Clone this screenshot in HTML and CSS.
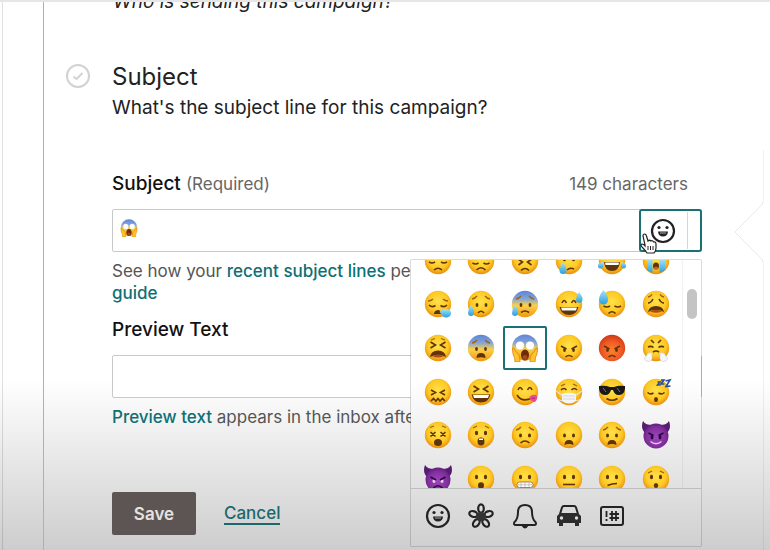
FILE: index.html
```html
<!DOCTYPE html>
<html lang="en">
<head>
    <meta charset="UTF-8">
    <meta name="viewport" content="width=device-width, initial-scale=1.0">
    <title>Campaign Subject</title>
    <link rel="stylesheet" href="styles.css">
</head>
<body>
    <!-- shared emoji parts -->
    <svg class="defs" width="0" height="0" aria-hidden="true">
        <defs>
            <radialGradient id="skin" cx="50%" cy="42%" r="58%">
                <stop offset="0" stop-color="#ffe14a"/>
                <stop offset="0.65" stop-color="#fdc924"/>
                <stop offset="1" stop-color="#e98d0d"/>
            </radialGradient>
            <linearGradient id="cold" x1="0" y1="0" x2="0" y2="1">
                <stop offset="0" stop-color="#5c86d6"/>
                <stop offset="0.3" stop-color="#83a2d8"/>
                <stop offset="0.55" stop-color="#fbd04a"/>
                <stop offset="1" stop-color="#ef980f"/>
            </linearGradient>
            <radialGradient id="red" cx="50%" cy="60%" r="60%">
                <stop offset="0" stop-color="#f9842d"/>
                <stop offset="0.6" stop-color="#ef5a24"/>
                <stop offset="1" stop-color="#cf3714"/>
            </radialGradient>
            <radialGradient id="purple" cx="50%" cy="55%" r="58%">
                <stop offset="0" stop-color="#a044bd"/>
                <stop offset="0.65" stop-color="#83309f"/>
                <stop offset="1" stop-color="#5b1c78"/>
            </radialGradient>
            <linearGradient id="water" x1="0" y1="0" x2="0" y2="1">
                <stop offset="0" stop-color="#a5e4fa"/>
                <stop offset="1" stop-color="#2c9fdc"/>
            </linearGradient>
        </defs>
        <symbol id="face" viewBox="0 0 28 28"><circle cx="14" cy="14" r="13.2" fill="url(#skin)"/></symbol>
        <symbol id="face-cold" viewBox="0 0 28 28"><circle cx="14" cy="14" r="13.2" fill="url(#cold)"/></symbol>
        <symbol id="face-devil" viewBox="0 0 28 28">
            <path d="M1 0C-1 5 0 10 4 12L10 4C6 4 3 3 1 0ZM27 0C29 5 28 10 24 12L18 4C22 4 25 3 27 0Z" fill="#571b73"/>
            <circle cx="14" cy="15" r="12.5" fill="url(#purple)"/>
        </symbol>
        <symbol id="eyes" viewBox="0 0 28 28">
            <ellipse class="ink" cx="9.5" cy="12" rx="1.6" ry="2.2"/>
            <ellipse class="ink" cx="18.5" cy="12" rx="1.6" ry="2.2"/>
        </symbol>
        <symbol id="eyes-shut" viewBox="0 0 28 28">
            <path class="line" d="M5.5 13Q8.5 15.5 11.5 13.5M16.5 13.5Q19.5 15.5 22.5 13"/>
        </symbol>
        <symbol id="eyes-tight" viewBox="0 0 28 28">
            <path class="line" d="M6.5 8L11.5 11L6.5 14M21.5 8L16.5 11L21.5 14"/>
        </symbol>
        <symbol id="brows-sad" viewBox="0 0 28 28">
            <path class="brow" d="M5 9Q8 8.5 10 6M23 9Q20 8.5 18 6"/>
        </symbol>
        <symbol id="scream" viewBox="0 0 28 28">
            <circle cx="14" cy="13.5" r="13" fill="url(#cold)"/>
            <circle cx="9" cy="11.5" r="4" fill="#fff"/>
            <circle cx="19" cy="11.5" r="4" fill="#fff"/>
            <ellipse cx="14" cy="21" rx="4" ry="5.5" fill="#6d2c08"/>
            <ellipse cx="14" cy="23.5" rx="2.5" ry="2.5" fill="#a84718"/>
            <path d="M1.5 14Q3 13 4 16L6 19Q9 20 9 28H4Q4 23 2 20ZM26.5 14Q25 13 24 16L22 19Q19 20 19 28H24Q24 23 26 20Z" fill="#ffc42a" stroke="#d87d0b" stroke-width="0.8"/>
        </symbol>
        <symbol id="smiley" viewBox="0 0 28 28">
            <circle cx="14" cy="14" r="11" fill="none" stroke="#222" stroke-width="2.2"/>
            <circle cx="10" cy="10.5" r="1.6" fill="#222"/>
            <circle cx="18" cy="10.5" r="1.6" fill="#222"/>
            <path d="M9 14.5H19Q18.500 19.500 14 19.500T9 14.500Z" fill="#222"/>
            <path d="M11 16H17" stroke="#aaa" stroke-width="1"/>
        </symbol>
    </svg>

    <div class="page">
        <div class="rail"></div>

        <main class="content">
            <div class="previous-step"><em>Who is sending this campaign?</em></div>

            <section class="step">
                <svg class="step-check" viewBox="0 0 24 24" aria-hidden="true">
                    <circle cx="12" cy="12" r="11"/>
                    <path d="M7.5 12.5L10.5 15L16.5 9"/>
                </svg>
                <form class="step-body">
                    <h1>Subject</h1>
                    <p class="intro">What's the subject line for this campaign?</p>

                    <div class="label-row">
                        <label for="subject">Subject <span class="required">(Required)</span></label>
                        <span class="counter">149 characters</span>
                    </div>
                    <div class="field">
                        <input type="text" id="subject" class="text-input">
                        <svg class="typed-emoji" viewBox="0 0 28 28" aria-hidden="true"><use href="#scream"/></svg>
                        <button type="button" class="emoji-toggle" aria-label="Insert emoji">
                            <svg viewBox="0 0 28 28"><use href="#smiley"/></svg>
                            <span class="toggle-edge"></span>
                        </button>
                        <svg class="pointer" viewBox="0 0 18 22" aria-hidden="true">
                            <path d="M5 12L3 3Q3 1 4.5 1T6.5 3L8 8Q9.5 6.5 11 8Q12.5 7 13.5 9Q16 8.5 16 11V15Q16 18 14 20H7Q5 17 2 14Q0 11.5 2 11Q3.5 11 5 13Z" fill="#fff" stroke="#222" stroke-width="1.2"/>
                            <path d="M8 13V17M10.5 13V17M13 13V17" stroke="#222" stroke-width="1"/>
                        </svg>

                        <div class="picker">
                            <div class="picker-scroll">
                                <div class="emoji-grid">
                                    <button type="button" aria-label="Unamused"><svg viewBox="0 0 28 28"><use href="#face"/><path class="line" d="M5 15Q8 17 11 15M17 15Q20 17 23 15M10 23Q14 19.5 18 23"/></svg></button>
                                    <button type="button" aria-label="Disappointed"><svg viewBox="0 0 28 28"><use href="#face"/><path class="line" d="M5.5 16Q8.5 18 11.5 16M16.5 16Q19.5 18 22.5 16M9.5 23Q14 18.5 18.5 23"/></svg></button>
                                    <button type="button" aria-label="Persevering"><svg viewBox="0 0 28 28"><use href="#face"/><path class="line" d="M7 12L11.5 15L7.5 18M21 12L16.5 15L20.5 18M10 23.5Q14 19.5 18 23.5"/></svg></button>
                                    <button type="button" aria-label="Crying"><svg viewBox="0 0 28 28"><use href="#face"/><use href="#eyes"/><path class="line" d="M12 23Q15 20 19 22"/><path class="tear" d="M8 15Q12 21 11.5 23.5A3.5 3.5 0 0 1 4.5 23.5Q5 20 8 15Z"/></svg></button>
                                    <button type="button" aria-label="Tears of joy"><svg viewBox="0 0 28 28"><use href="#face"/><path class="line" d="M5.5 12Q8 8 11 12M17 12Q20 8 22.5 12"/><path class="ink" d="M6 15H22Q21 24 14 24T6 15Z"/><path d="M7 15.5H21L20.5 18H7.5Z" fill="#fff"/><path class="tear" d="M5 15Q-1 16 0 20Q2 23 5 20ZM23 15Q29 16 28 20Q26 23 23 20Z"/></svg></button>
                                    <button type="button" aria-label="Sobbing"><svg viewBox="0 0 28 28"><use href="#face"/><path class="tear" d="M5 12H10.5V25.5Q7 24.5 5 23ZM17.5 12H23V23Q21 24.5 17.5 25.5Z"/><path class="line" d="M5 11Q8 13 11 11M17 11Q20 13 23 11"/><ellipse class="ink" cx="14" cy="19" rx="3" ry="3.5"/><ellipse cx="14" cy="21" rx="2" ry="1.3" fill="#d3652b"/></svg></button>

                                    <button type="button" aria-label="Sleepy"><svg viewBox="0 0 28 28"><use href="#face"/><path class="line" d="M5 15Q8 18 11.5 15.5M16.5 15.5Q20 18 23 15"/><path class="brow" d="M4 11Q7 11 9 9M24 11Q21 11 19 9"/><path class="ink" d="M10 24Q10 20 15 20L19 24Z"/><path class="tear" d="M15.5 22Q19 17 26 20Q29 26 23 27.5Q19 28 18 25Z"/></svg></button>
                                    <button type="button" aria-label="Sad but relieved"><svg viewBox="0 0 28 28"><use href="#face"/><use href="#brows-sad"/><ellipse class="ink" cx="10" cy="15" rx="1.4" ry="2"/><ellipse class="ink" cx="19" cy="15" rx="1.4" ry="2"/><path class="line" d="M11 23Q14 19.5 17 23"/><path class="tear" d="M4 15Q7.5 20 7 23A3 3 0 0 1 1 23Q1 19 4 15Z"/></svg></button>
                                    <button type="button" aria-label="Anxious with sweat"><svg viewBox="0 0 28 28"><use href="#face-cold"/><use href="#brows-sad"/><ellipse class="ink" cx="10" cy="15" rx="1.4" ry="2"/><ellipse class="ink" cx="19" cy="15" rx="1.4" ry="2"/><path class="line" d="M10 22.5Q14 19.5 18 22.5"/><path class="tear" d="M4 15Q7.5 20 7 23A3 3 0 0 1 1 23Q1 19 4 15Z"/></svg></button>
                                    <button type="button" aria-label="Grinning with sweat"><svg viewBox="0 0 28 28"><use href="#face"/><path class="line" d="M7 13Q9 8 11.5 13M16.5 13Q19 8 21 13"/><path class="ink" d="M4.5 17H23.5Q21.5 25 14 25T4.5 17Z"/><path d="M6 17.5H22L21 20.5H7Z" fill="#fff"/><path class="tear" d="M24 2Q28 7 27.5 10A3.3 3.3 0 0 1 21 10Q21 6 24 2Z"/></svg></button>
                                    <button type="button" aria-label="Downcast with sweat"><svg viewBox="0 0 28 28"><use href="#face"/><path class="line" d="M5.5 16Q9 18 12 16M16.5 16Q20 18 23 16M10.5 23.5Q14 20 17.5 23.5"/><path class="tear" d="M5.5 0Q10.5 6 10 10A4.5 4.5 0 0 1 1 10Q1 5 5.5 0Z"/></svg></button>
                                    <button type="button" aria-label="Weary"><svg viewBox="0 0 28 28"><use href="#face"/><path class="line" d="M6 13Q9 13 11 9M22 13Q19 13 17 9"/><path class="brow" d="M6 7Q8 7 10 4.5M22 7Q20 7 18 4.5"/><path class="ink" d="M6 22Q7 16 14 16T22 22Q19 20 14 20T6 22Z"/><path d="M8 21.5Q14 18 20 21.5Q14 24 8 21.5Z" fill="#b04a1c"/></svg></button>

                                    <button type="button" aria-label="Tired"><svg viewBox="0 0 28 28"><use href="#face"/><use href="#eyes-tight"/><path class="brow" d="M7 6L11 4.5M21 6L17 4.5"/><path class="ink" d="M6 23Q7 16.5 14 16.5T22 23Q18 21 14 21T6 23Z"/><path d="M8 22Q14 19 20 22Q14 25 8 22Z" fill="#b04a1c"/></svg></button>
                                    <button type="button" aria-label="Fearful"><svg viewBox="0 0 28 28"><use href="#face-cold"/><use href="#brows-sad"/><ellipse class="ink" cx="9.5" cy="15" rx="1.4" ry="2"/><ellipse class="ink" cx="18.5" cy="15" rx="1.4" ry="2"/><path class="ink" d="M9.5 24Q9.5 19 14 19T18.5 24Q14 22.5 9.5 24Z"/></svg></button>
                                    <button type="button" class="selected" aria-label="Screaming in fear"><svg viewBox="0 0 28 28"><use href="#scream"/></svg></button>
                                    <button type="button" aria-label="Angry"><svg viewBox="0 0 28 28"><use href="#face"/><ellipse class="ink" cx="9.5" cy="16" rx="1.4" ry="2"/><ellipse class="ink" cx="18.5" cy="16" rx="1.4" ry="2"/><path class="line" d="M6 12L11.5 15M22 12L16.5 15M10.5 23Q14 20 17.5 23"/></svg></button>
                                    <button type="button" aria-label="Enraged"><svg viewBox="0 0 28 28"><circle cx="14" cy="14" r="13.2" fill="url(#red)"/><ellipse class="ink" cx="9.5" cy="16" rx="1.4" ry="2"/><ellipse class="ink" cx="18.5" cy="16" rx="1.4" ry="2"/><path class="line" d="M6 12L11.5 15M22 12L16.5 15M10.5 23Q14 20 17.5 23"/></svg></button>
                                    <button type="button" aria-label="Steam from nose"><svg viewBox="0 0 28 28"><use href="#face"/><path class="line" d="M6 13Q9 11.5 11.5 13.5M16.5 13.5Q19 11.5 22 13M9 6L12 9M19 6L16 9M11 18Q14 16 17 18"/><path d="M10 19Q5 18 4.5 22Q1 24 4 27Q8 29 10 25ZM18 19Q23 18 23.5 22Q27 24 24 27Q20 29 18 25Z" fill="#f5f7fa" stroke="#c8cbd0" stroke-width="0.6"/></svg></button>

                                    <button type="button" aria-label="Confounded"><svg viewBox="0 0 28 28"><use href="#face"/><path class="line" d="M7 12L11.5 14.5L7 17M21 12L16.5 14.5L21 17M7 23L9.5 20.5L12 23L14 20.5L16 23L18.5 20.5L21 23"/></svg></button>
                                    <button type="button" aria-label="Laughing"><svg viewBox="0 0 28 28"><use href="#face"/><use href="#eyes-tight"/><path class="ink" d="M4.5 16.5H23.5Q21.5 24.5 14 24.5T4.5 16.5Z"/><path d="M6 17H22L21 20H7Z" fill="#fff"/></svg></button>
                                    <button type="button" aria-label="Savoring"><svg viewBox="0 0 28 28"><use href="#face"/><path class="line" d="M7 12Q9 7 11.5 12M16.5 12Q19 7 21 12M6 17Q11 25 21 20"/><path d="M18 20Q20 16 25 17Q28 20 24 24Q20 24 18 20Z" fill="#e94c92"/><path d="M20.5 20.5L24 20" stroke="#b12665" stroke-width="1"/></svg></button>
                                    <button type="button" aria-label="Medical mask"><svg viewBox="0 0 28 28"><use href="#face"/><path class="line" d="M6 12Q9 9 11.5 12M16.5 12Q19 9 22 12"/><path class="brow" d="M6 8L10 6M22 8L18 6"/><path d="M1 13L7 17M27 13L21 17M2 21L7 23M26 21L21 23" stroke="#e3e3e7" stroke-width="1.3"/><path d="M7 16Q14 13.5 21 16V23Q14 28 7 23Z" fill="#f4f4f6"/><path d="M8 18H20M8 21H20" stroke="#d2d3d9" stroke-width="0.8"/></svg></button>
                                    <button type="button" aria-label="Sunglasses"><svg viewBox="0 0 28 28"><use href="#face"/><path d="M1 8Q7 7 12 9H16Q21 7 27 8V11Q26 17 20.5 17Q16.5 17 15 12H13Q11.5 17 7.5 17Q2 17 1 11Z" fill="#191919"/><path d="M5 10L8 14M19 10L22 14" stroke="#777" stroke-width="1"/><path class="line" d="M8.5 20.5Q14 24 19.5 20.5"/></svg></button>
                                    <button type="button" aria-label="Sleeping"><svg viewBox="0 0 28 28"><use href="#face"/><path class="line" d="M5.5 14.5Q8.5 17 11.5 15M16.5 15Q19.5 17 22.5 14.5"/><ellipse class="ink" cx="14" cy="21.5" rx="2" ry="2.5"/><path d="M15.5 4H18L15.5 7H18.5M19 2H22L19 6H22.5M23.5 3L28 2L24 8.5L28.5 8" fill="none" stroke="#294f9c" stroke-width="1.6"/></svg></button>

                                    <button type="button" aria-label="Dizzy"><svg viewBox="0 0 28 28"><use href="#face"/><path class="line" d="M6.5 11L11.5 15.5M11.5 11L6.5 15.5M16.5 11L21.5 15.5M21.5 11L16.5 15.5"/><path class="brow" d="M6 6.5L10 5M22 6.5L18 5"/><ellipse class="ink" cx="14" cy="21.5" rx="4" ry="3.5"/></svg></button>
                                    <button type="button" aria-label="Astonished"><svg viewBox="0 0 28 28"><use href="#face"/><use href="#eyes"/><path class="brow" d="M6 7L10 5M22 7L18 5"/><ellipse class="ink" cx="14" cy="20.5" rx="3.5" ry="4"/><path d="M12 17.5H16V19H12Z" fill="#fff"/></svg></button>
                                    <button type="button" aria-label="Worried"><svg viewBox="0 0 28 28"><use href="#face"/><use href="#brows-sad"/><ellipse class="ink" cx="9.5" cy="14.5" rx="1.5" ry="2"/><ellipse class="ink" cx="18.5" cy="14.5" rx="1.5" ry="2"/><path class="line" d="M9.5 22Q14 18 18.5 22"/></svg></button>
                                    <button type="button" aria-label="Frowning"><svg viewBox="0 0 28 28"><use href="#face"/><ellipse class="ink" cx="9.5" cy="14.5" rx="1.5" ry="2"/><ellipse class="ink" cx="18.5" cy="14.5" rx="1.5" ry="2"/><path class="ink" d="M9.5 24Q9.5 19 14 19T18.5 24Q14 22 9.5 24Z"/></svg></button>
                                    <button type="button" aria-label="Anguished"><svg viewBox="0 0 28 28"><use href="#face"/><use href="#brows-sad"/><ellipse class="ink" cx="9.5" cy="14.5" rx="1.5" ry="2"/><ellipse class="ink" cx="18.5" cy="14.5" rx="1.5" ry="2"/><path class="ink" d="M9.5 24Q9.5 19 14 19T18.5 24Q14 22 9.5 24Z"/></svg></button>
                                    <button type="button" aria-label="Smiling devil"><svg viewBox="0 0 28 28"><use href="#face-devil"/><ellipse cx="10" cy="16" rx="1.4" ry="2.6" fill="#28073c"/><ellipse cx="18" cy="16" rx="1.4" ry="2.6" fill="#28073c"/><path d="M6.5 12L11.5 14.5M21.5 12L16.5 14.5" stroke="#28073c" stroke-width="1.5"/><path d="M8.5 20.5Q14 25 19.5 20.5" fill="none" stroke="#e4c5ef" stroke-width="1.5"/></svg></button>

                                    <button type="button" aria-label="Devil"><svg viewBox="0 0 28 28"><use href="#face-devil"/><ellipse cx="10" cy="16" rx="1.5" ry="2" fill="#ead2f2"/><ellipse cx="18" cy="16" rx="1.5" ry="2" fill="#ead2f2"/><path d="M6.5 12L12 15M21.5 12L16 15" stroke="#28073c" stroke-width="1.7"/><path d="M9.5 23Q14 18.5 18.5 23" fill="none" stroke="#28073c" stroke-width="1.6"/></svg></button>
                                    <button type="button" aria-label="Open mouth"><svg viewBox="0 0 28 28"><use href="#face"/><use href="#eyes"/><ellipse class="ink" cx="14" cy="20.5" rx="3" ry="3.2"/></svg></button>
                                    <button type="button" aria-label="Grimacing"><svg viewBox="0 0 28 28"><use href="#face"/><use href="#eyes"/><rect x="6" y="17" width="16" height="5.5" rx="2.5" fill="#fff" stroke="#a6753a" stroke-width="0.9"/><path d="M7 19.8H21M10 17V22M14 17V22M18 17V22" stroke="#b9b2a8" stroke-width="0.8"/></svg></button>
                                    <button type="button" aria-label="Neutral"><svg viewBox="0 0 28 28"><use href="#face"/><use href="#eyes"/><path class="line" d="M8 19.5H20"/></svg></button>
                                    <button type="button" aria-label="Confused"><svg viewBox="0 0 28 28"><use href="#face"/><use href="#eyes"/><path class="line" d="M9.5 20.5Q14 18.5 19 18.5"/></svg></button>
                                    <button type="button" aria-label="Hushed"><svg viewBox="0 0 28 28"><use href="#face"/><use href="#eyes"/><path class="brow" d="M6 8L10 6M22 8L18 6"/><ellipse class="ink" cx="14" cy="20.5" rx="2.2" ry="2.5"/></svg></button>
                                </div>
                                <div class="scroll-track"><div class="scroll-thumb"></div></div>
                            </div>
                            <div class="categories">
                                <button type="button" aria-label="People"><svg viewBox="0 0 28 28"><use href="#smiley"/></svg></button>
                                <button type="button" aria-label="Nature">
                                    <svg viewBox="0 0 28 28">
                                        <g fill="none" stroke="#222" stroke-width="2.2">
                                            <ellipse cx="14" cy="6.5" rx="2.8" ry="4.2"/>
                                            <ellipse cx="14" cy="6.5" rx="2.8" ry="4.2" transform="rotate(72 14 14.5)"/>
                                            <ellipse cx="14" cy="6.5" rx="2.8" ry="4.2" transform="rotate(144 14 14.5)"/>
                                            <ellipse cx="14" cy="6.5" rx="2.8" ry="4.2" transform="rotate(216 14 14.5)"/>
                                            <ellipse cx="14" cy="6.5" rx="2.8" ry="4.2" transform="rotate(288 14 14.5)"/>
                                        </g>
                                        <circle cx="14" cy="14.5" r="4.8" fill="#333"/>
                                    </svg>
                                </button>
                                <button type="button" aria-label="Objects">
                                    <svg viewBox="0 0 28 28" fill="none" stroke="#222" stroke-width="2">
                                        <path d="M14 3Q7 3 7 10Q7 17 3.5 20Q2 23 5 23H23Q26 23 24.5 20Q21 17 21 10Q21 3 14 3Z"/>
                                        <path d="M12 24Q14 27 16 24Z" fill="#222"/>
                                    </svg>
                                </button>
                                <button type="button" aria-label="Places">
                                    <svg viewBox="0 0 28 28">
                                        <path d="M5 12L7 5.5Q7.5 4 9 4H19Q20.5 4 21 5.5L23 12" fill="none" stroke="#222" stroke-width="2"/>
                                        <path d="M5 11H23L26 14V21H24V24H20V21H8V24H4V21H2V14Z" fill="#2c2c2c"/>
                                        <circle cx="6.5" cy="16" r="1.7" fill="#ddd"/>
                                        <circle cx="21.5" cy="16" r="1.7" fill="#ddd"/>
                                    </svg>
                                </button>
                                <button type="button" aria-label="Symbols">
                                    <svg viewBox="0 0 28 28" fill="none" stroke="#222">
                                        <rect x="3" y="5" width="22" height="18" rx="2" stroke-width="2"/>
                                        <path d="M8.5 9V15M8.5 17V19" stroke-width="1.8"/>
                                        <path d="M14 9V19M18 9V19M11.5 12H21M11.5 16H21" stroke-width="1.8"/>
                                    </svg>
                                </button>
                            </div>
                        </div>
                    </div>
                    <p class="help">See how your <a href="#">recent subject lines</a> performed, or read our <a href="#">writing<br>guide</a></p>

                    <div class="label-row">
                        <label for="preview">Preview Text</label>
                    </div>
                    <div class="field">
                        <input type="text" id="preview" class="text-input">
                    </div>
                    <p class="help"><a href="#">Preview text</a> appears in the inbox after the subject line.</p>

                    <div class="actions">
                        <button type="submit" class="save">Save</button>
                        <a href="#" class="cancel">Cancel</a>
                    </div>
                </form>
            </section>
        </main>

        <aside class="preview-edge">
            <svg viewBox="0 0 30 60" fill="none" stroke="#e8e8e8" aria-hidden="true">
                <path d="M29.5 0V2L2 30L29.5 58V60"/>
            </svg>
        </aside>
    </div>
</body>
</html>
```
FILE: styles.css
```css
* {
    box-sizing: border-box;
}

body {
    margin: 0;
    background-color: #fff;
    color: #222;
    font-family: Inter, "Liberation Sans", sans-serif;
    font-size: 17px;
    line-height: 22px;
}

.defs {
    position: absolute;
}

.page {
    display: grid;
    grid-template-columns: 44px 1fr 68px;
    min-height: 100vh;
    border-top: 2px solid #e6e6e6;
    background: linear-gradient(#fff calc(100% - 170px), #cdcdcd);
    overflow: hidden;
}

.rail {
    margin-left: 2px;
    border-left: 1px solid rgba(0, 0, 0, 0.12);
    border-right: 1px solid #b0b0b0;
}

.previous-step {
    display: flex;
    align-items: flex-end;
    height: 12px;
    margin-bottom: 47px;
    padding-left: 69px;
    overflow: hidden;
    font-size: 19px;
    line-height: 24px;
}

.step {
    display: flex;
    gap: 22px;
    padding-left: 22px;
}

.step-check {
    flex: none;
    width: 24px;
    height: 24px;
    margin-top: 3px;
    fill: none;
    stroke: #d2d2d2;
    stroke-width: 2;
}

.step-body {
    flex: 1;
}

h1 {
    margin: 0;
    font-size: 24px;
    font-weight: 400;
    line-height: 32px;
}

.intro {
    margin: 3px 0 52px;
    font-size: 19px;
    line-height: 24px;
}

.label-row {
    display: flex;
    justify-content: space-between;
    margin-bottom: 13px;
    padding-right: 14px;
    line-height: 24px;
}

label {
    color: #111;
    font-size: 19px;
    font-weight: 500;
}

.required,
.counter {
    color: #666;
    font-size: 17px;
    font-weight: 400;
}

.field {
    position: relative;
}

.text-input {
    display: block;
    width: 100%;
    height: 43px;
    padding: 0 62px 0 36px;
    border: 1px solid #c9c9c9;
    border-radius: 2px;
    background-color: #fff;
    font: inherit;
}

.typed-emoji {
    position: absolute;
    left: 8px;
    top: 10px;
    width: 18px;
    height: 18px;
}

.emoji-toggle {
    position: absolute;
    right: 0;
    top: 0;
    display: flex;
    align-items: center;
    justify-content: space-between;
    width: 63px;
    height: 43px;
    padding: 0 12px 0 8px;
    border: 2px solid #1a7075;
    border-radius: 3px;
    background-color: #fff;
}

.emoji-toggle svg {
    width: 28px;
    height: 28px;
}

.toggle-edge {
    height: 37px;
    border-left: 1px solid #d5d5d5;
}

.pointer {
    position: absolute;
    right: 44px;
    top: 24px;
    width: 18px;
    height: 22px;
    z-index: 3;
}

.picker {
    position: absolute;
    right: 0;
    top: 50px;
    width: 292px;
    border: 1px solid rgba(0, 0, 0, 0.14);
    border-radius: 2px;
    background: linear-gradient(#fff 120px, #d0d0d0);
    background-clip: padding-box;
    z-index: 2;
}

.picker-scroll {
    display: flex;
    justify-content: space-between;
    height: 229px;
    padding-left: 5px;
    border-bottom: 1px solid #bdbdbd;
    overflow: hidden;
}

.emoji-grid {
    display: grid;
    grid-template-columns: repeat(6, 1fr);
    grid-template-rows: repeat(6, 1fr);
    width: 262px;
    height: 262px;
    margin-top: -21px;
}

.emoji-grid button,
.categories button {
    display: flex;
    align-items: center;
    justify-content: center;
    padding: 0;
    border: 2px solid transparent;
    background: none;
    cursor: pointer;
}

.emoji-grid .selected {
    border-color: #1a7075;
    border-radius: 2px;
}

.emoji-grid svg,
.categories svg {
    width: 28px;
    height: 28px;
    overflow: visible;
}

.ink {
    fill: #60330b;
}

.line {
    fill: none;
    stroke: #60330b;
    stroke-width: 1.6;
}

.brow {
    fill: none;
    stroke: #9b6414;
    stroke-width: 1.3;
}

.tear {
    fill: url(#water);
}

.scroll-track {
    width: 19px;
    padding: 29px 4px 0;
    border-left: 1px solid rgba(0, 0, 0, 0.05);
}

.scroll-thumb {
    height: 30px;
    border-radius: 5px;
    background-color: #c4c4c4;
}

.categories {
    display: grid;
    grid-template-columns: repeat(6, 1fr);
    width: 272px;
    height: 57px;
    padding: 0 5px 4px;
}

.help {
    margin: 8px 0 14px;
    color: #555;
}

a {
    color: #0c7075;
    font-weight: 500;
    text-decoration: none;
}

.actions {
    display: flex;
    align-items: center;
    gap: 28px;
    margin-top: 64px;
}

.save {
    width: 84px;
    height: 43px;
    border: 0;
    border-radius: 2px;
    background-color: #5d5553;
    color: #e6e2e0;
    font: inherit;
    font-weight: 600;
    cursor: pointer;
}

.cancel {
    border-bottom: 2px solid #1c686b;
    color: #1c686b;
    line-height: 20px;
}

.preview-edge {
    padding: 148px 0 0 31px;
}

.preview-edge::before,
.preview-edge::after {
    content: "";
    display: block;
    width: 30px;
    height: 52px;
    border-right: 1px solid rgba(0, 0, 0, 0.06);
}

.preview-edge::after {
    height: 288px;
}

.preview-edge svg {
    display: block;
    width: 30px;
    height: 60px;
}
```
